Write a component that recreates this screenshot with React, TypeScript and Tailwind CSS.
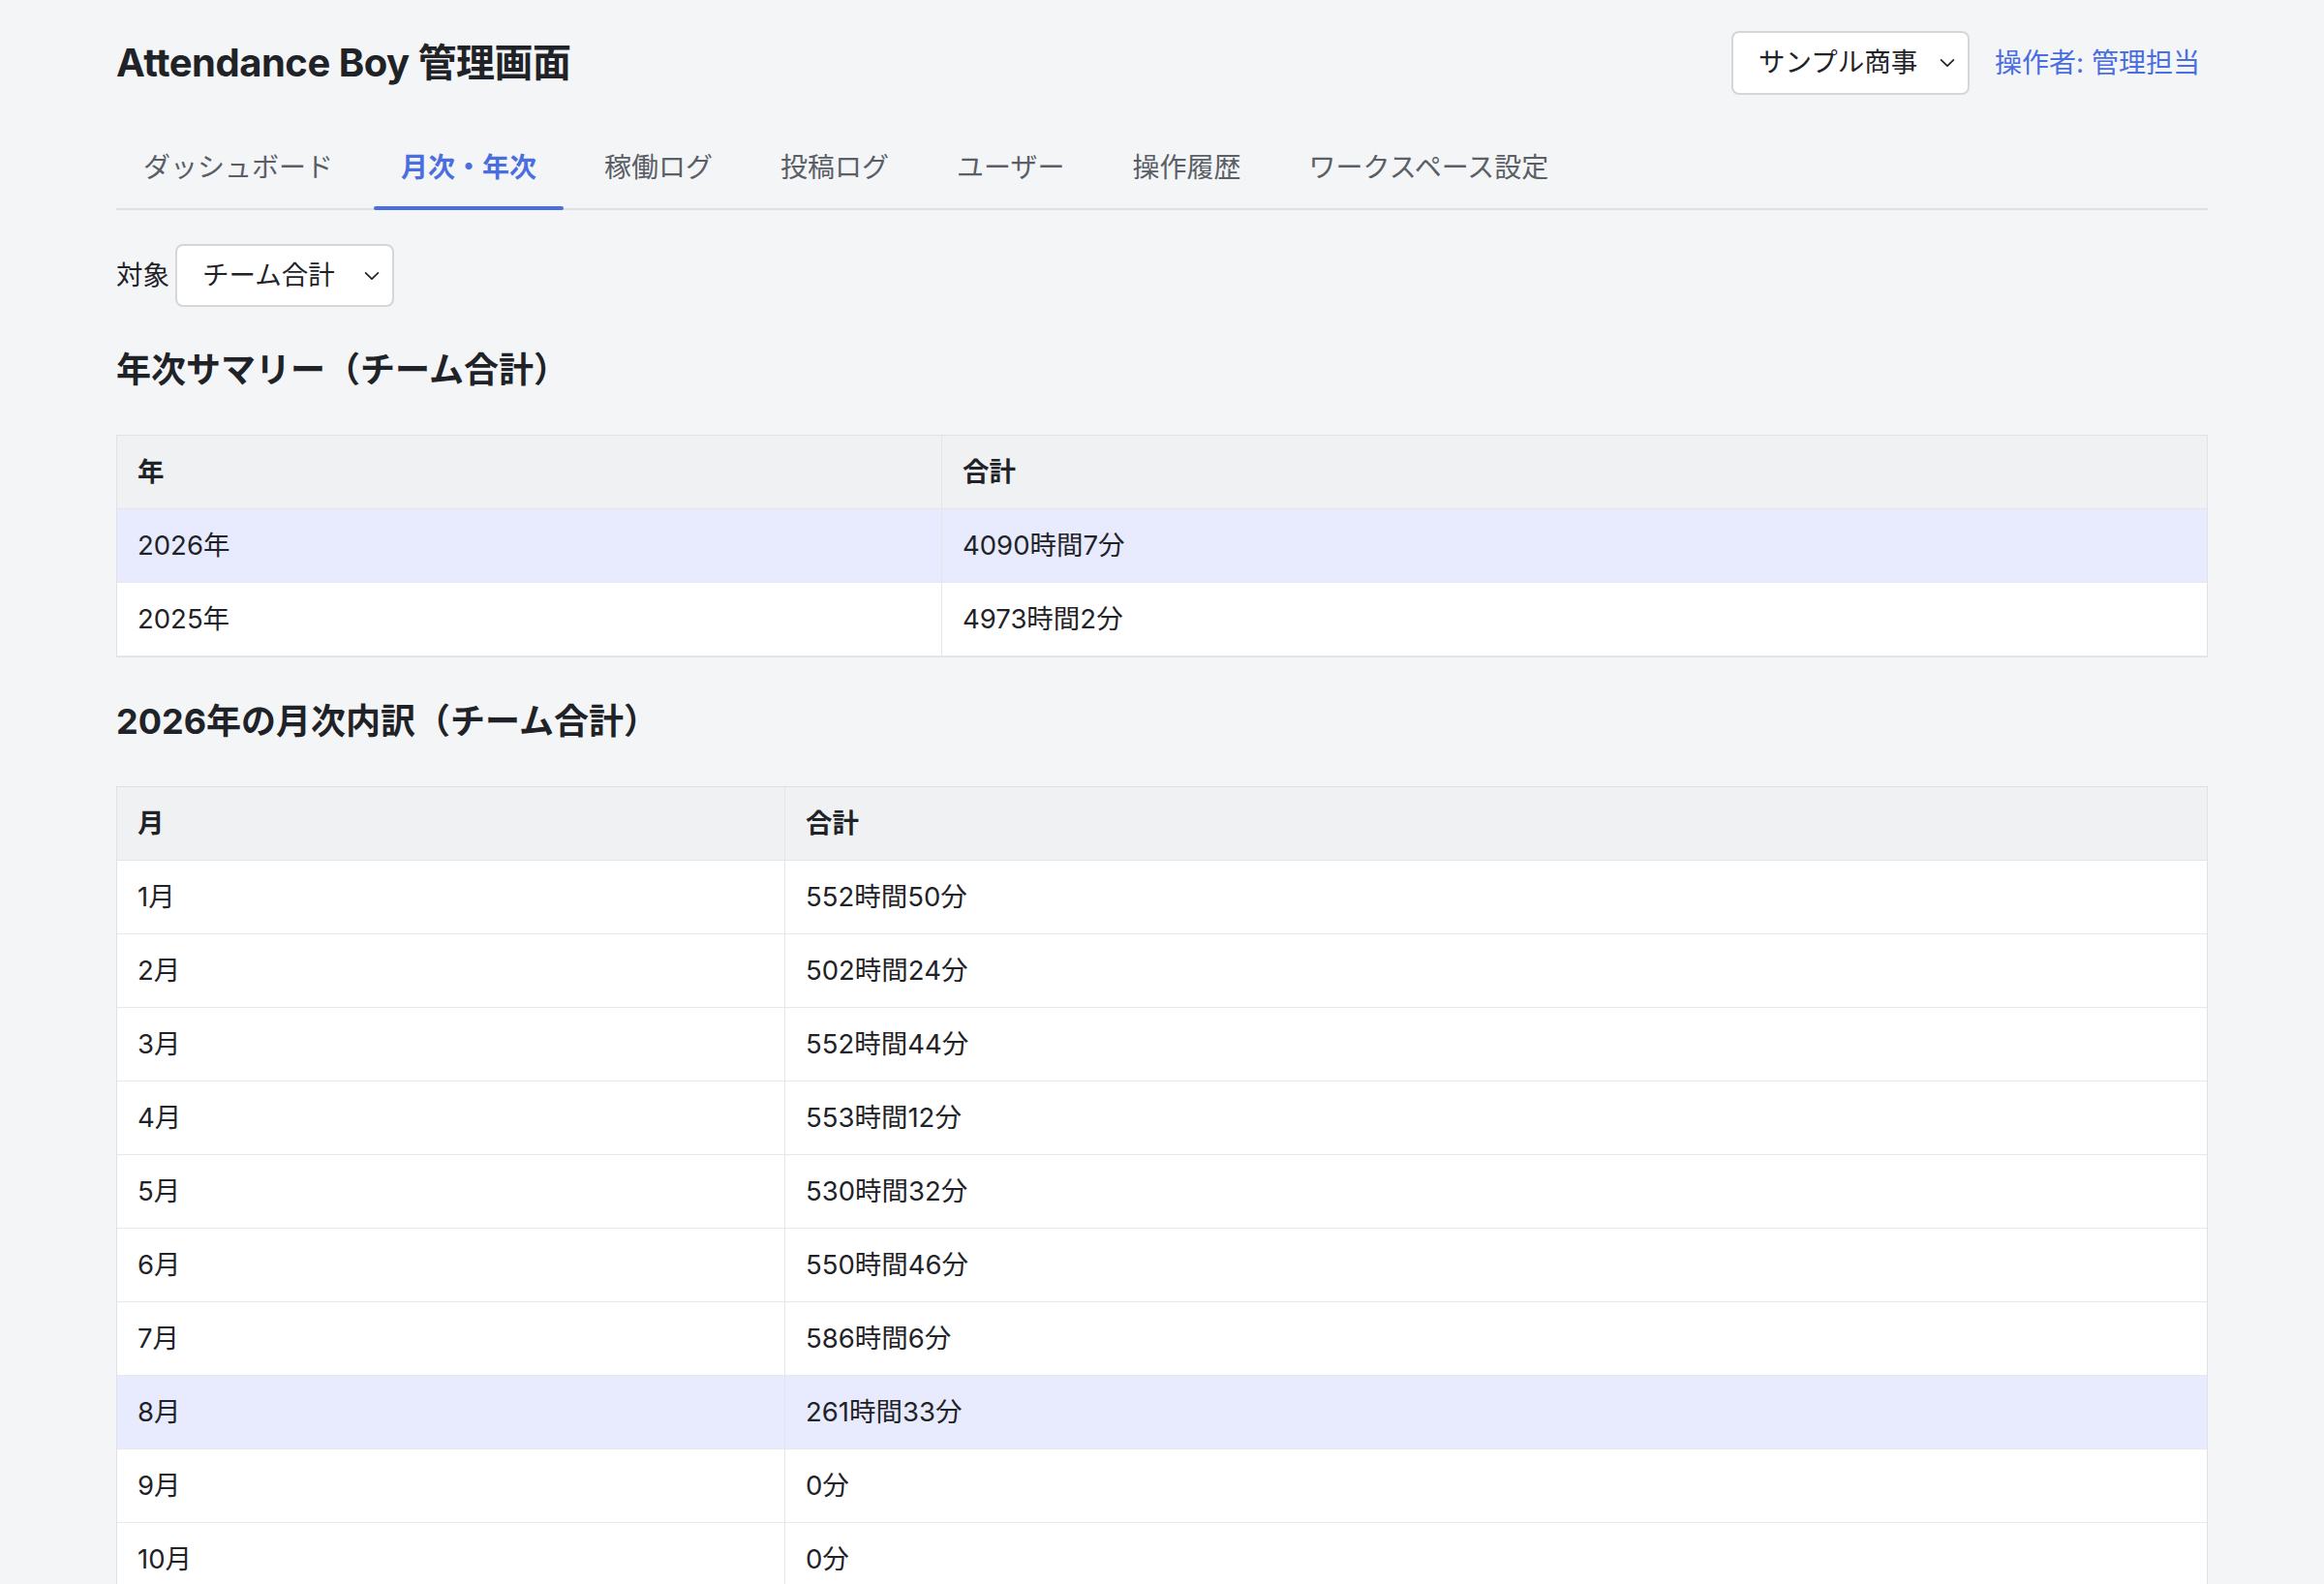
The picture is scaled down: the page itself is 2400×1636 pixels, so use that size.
import React from "react";

const font = { fontFamily: 'Inter, "Noto Sans CJK JP", sans-serif' };

const Chevron = () => (
  <svg width="22" height="22" viewBox="0 0 24 24" fill="none" stroke="#222" strokeWidth="1.8" strokeLinecap="round" strokeLinejoin="round">
    <path d="M5 8.5l7 7 7-7" />
  </svg>
);

const tabs = ["ダッシュボード", "月次・年次", "稼働ログ", "投稿ログ", "ユーザー", "操作履歴", "ワークスペース設定"];

const months: [string, string, boolean][] = [
  ["1月", "552時間50分", false],
  ["2月", "502時間24分", false],
  ["3月", "552時間44分", false],
  ["4月", "553時間12分", false],
  ["5月", "530時間32分", false],
  ["6月", "550時間46分", false],
  ["7月", "586時間6分", false],
  ["8月", "261時間33分", true],
  ["9月", "0分", false],
  ["10月", "0分", false],
  ["11月", "0分", false],
  ["12月", "0分", false],
];

function Table({ head, rows, split }: { head: [string, string]; rows: [string, string, boolean][]; split: string }) {
  return (
    <div className="border border-[#dfe1e5] bg-white text-[27.5px] text-[#1f2328]">
      <div className="flex h-[76px] items-center bg-[#f0f1f3] font-bold border-b border-[#e3e5e8]">
        <div className={`${split} h-full flex items-center px-[21px] border-r border-[#e3e5e8]`}>{head[0]}</div>
        <div className="flex-1 px-[21px]">{head[1]}</div>
      </div>
      {rows.map(([a, b, hl], i) => (
        <div key={i} className={`flex h-[76px] items-center border-b border-[#e6e8eb] ${hl ? "bg-[#e8ebfd]" : "bg-white"}`}>
          <div className={`${split} h-full flex items-center px-[21px] border-r border-[#e3e5e8]`}>{a}</div>
          <div className="flex-1 px-[21px]">{b}</div>
        </div>
      ))}
    </div>
  );
}

export default function App() {
  return (
    <div className="min-h-screen bg-[#f4f5f7]" style={font}>
      <div className="mx-auto w-[2160px] pt-[32px] pb-[60px]">
        <div className="flex h-[66px] items-center justify-between">
          <h1 className="text-[40px] font-bold text-[#1f2328] tracking-[-0.5px]">Attendance Boy 管理画面</h1>
          <div className="flex items-center gap-[26px]">
            <div className="flex h-[66px] w-[246px] items-center justify-between rounded-[8px] border-2 border-[#d4d6da] bg-white pl-[26px] pr-[10px] text-[27.5px] text-[#1f2328]">
              サンプル商事 <Chevron />
            </div>
            <span className="text-[28px] text-[#4a6ee0] pr-[8px]">操作者: 管理担当</span>
          </div>
        </div>

        <div className="mt-[32px] flex h-[87px] items-stretch gap-[14px] border-b-2 border-[#dcdfe3] px-0">
          {tabs.map((t, i) => (
            <div key={t} className={`relative flex items-center px-[28px] text-[28px] ${i === 1 ? "font-bold text-[#4a6ee0]" : "text-[#5a5e66]"}`}>
              {t}
              {i === 1 && <div className="absolute bottom-[-2px] left-0 right-0 h-[4px] rounded-full bg-[#4a6ee0]" />}
            </div>
          ))}
        </div>

        <div className="mt-[35px] flex items-center gap-[6px] text-[27.5px] text-[#1f2328]">
          <span>対象</span>
          <div className="flex h-[65px] w-[226px] items-center justify-between rounded-[8px] border-2 border-[#d4d6da] bg-white pl-[26px] pr-[10px]">
            チーム合計 <Chevron />
          </div>
        </div>

        <h2 className="mt-[40px] text-[36px] font-bold leading-[50px] text-[#1f2328]">年次サマリー（チーム合計）</h2>
        <div className="mt-[42px]">
          <Table head={["年", "合計"]} split="w-[852px]" rows={[["2026年", "4090時間7分", true], ["2025年", "4973時間2分", false]]} />
        </div>

        <h2 className="mt-[41px] text-[36px] font-bold leading-[50px] text-[#1f2328]">2026年の月次内訳（チーム合計）</h2>
        <div className="mt-[42px]">
          <Table head={["月", "合計"]} split="w-[690px]" rows={months} />
        </div>
      </div>
    </div>
  );
}
